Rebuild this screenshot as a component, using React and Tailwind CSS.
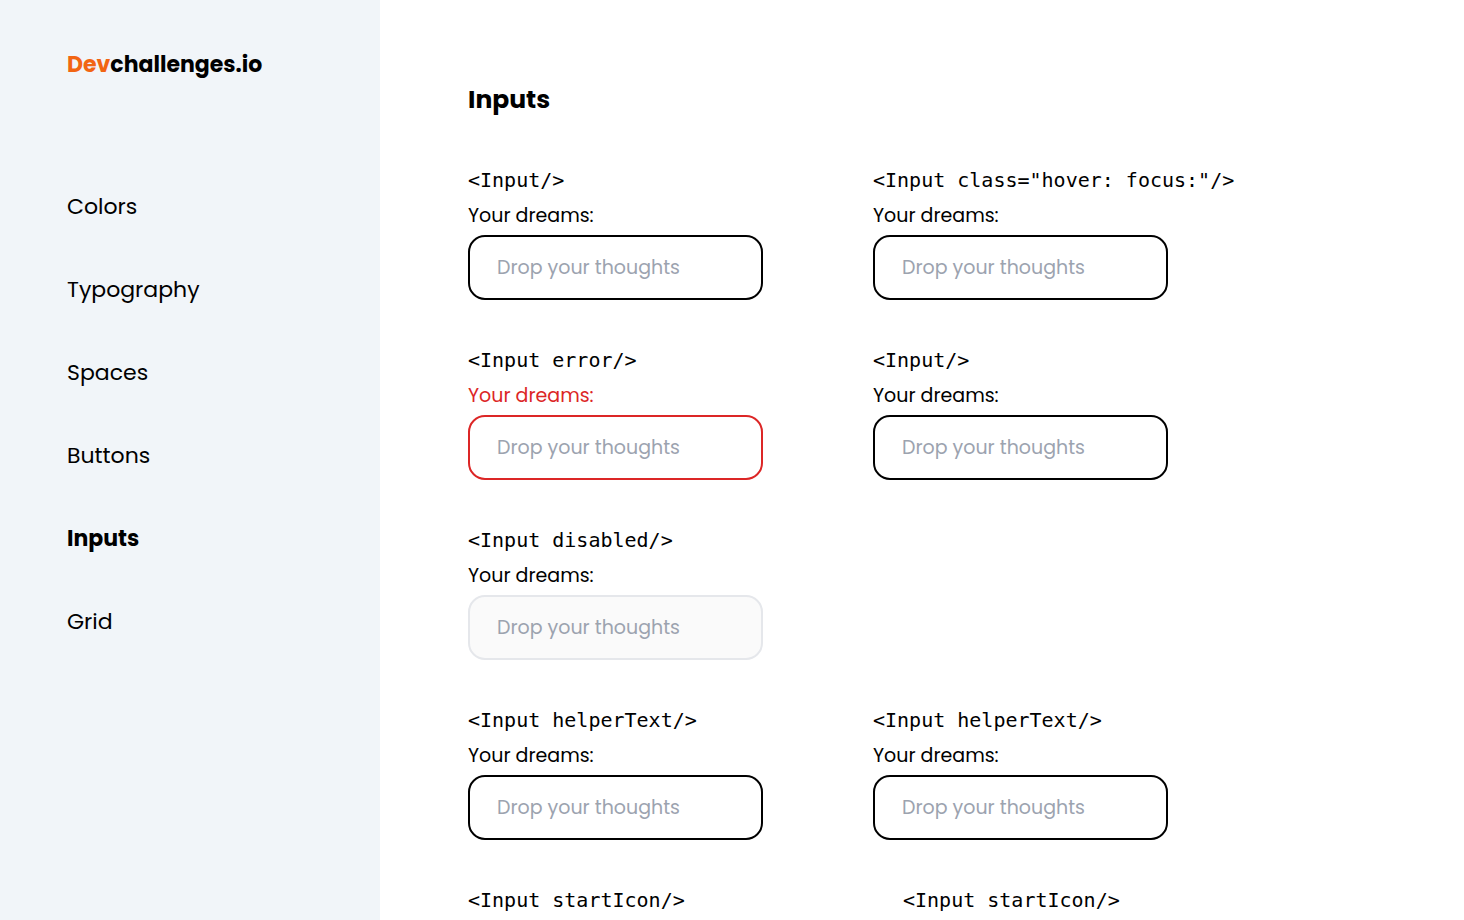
import { useId } from "react";

const navItems = ["Colors", "Typography", "Spaces", "Buttons", "Inputs", "Grid"];

const variants = {
  default: "border-black bg-white",
  error: "border-[#dc2626] bg-white",
  disabled: "border-[#e5e7eb] bg-[#fafafa]",
};

function Field({ code, variant = "default" }) {
  const id = useId();
  return (
    <div className="flex flex-col items-start">
      <code className="whitespace-nowrap font-['Consolas','DejaVu_Sans_Mono',monospace] text-[20px] leading-[30px]">
        {code}
      </code>
      <label
        htmlFor={id}
        className={`mt-1.5 mb-1 text-[19px] leading-[30px] ${variant === "error" ? "text-[#dc2626]" : "text-black"}`}
      >
        Your dreams:
      </label>
      <input
        id={id}
        type="text"
        placeholder="Drop your thoughts"
        disabled={variant === "disabled"}
        className={`h-[65px] w-[295px] rounded-[17px] border-2 px-[27px] text-[19px] outline-none placeholder:text-[#9ca3af] ${variants[variant]}`}
      />
    </div>
  );
}

function Row({ children, wide = false }) {
  return <div className={`flex ${wide ? "gap-[140px]" : "gap-[110px]"}`}>{children}</div>;
}

export default function App() {
  return (
    <div className="flex h-screen bg-white font-['Poppins','Inter',sans-serif] text-black">
      <aside className="w-[380px] shrink-0 bg-[#f1f5f9] pl-[67px] pt-12">
        <a href="#home" className="block text-[22px] font-bold leading-[33px]">
          <span className="text-[#f26513]">Dev</span>challenges.io
        </a>
        <nav className="mt-[109px] flex flex-col gap-[50px] text-[22px] leading-[33px]">
          {navItems.map((item) => (
            <a
              key={item}
              href={`#${item.toLowerCase()}`}
              className={item === "Inputs" ? "font-bold" : "font-normal"}
            >
              {item}
            </a>
          ))}
        </nav>
      </aside>
      <main className="min-w-0 flex-1 overflow-y-auto pl-[88px] pt-20 [scrollbar-width:none]">
        <h1 className="text-[25px] font-bold leading-10">Inputs</h1>
        <div className="mt-[45px] flex flex-col gap-[45px]">
          <Row>
            <Field code="<Input/>" />
            <Field code={'<Input class="hover: focus:"/>'} />
          </Row>
          <Row>
            <Field code="<Input error/>" variant="error" />
            <Field code="<Input/>" />
          </Row>
          <Row>
            <Field code="<Input disabled/>" variant="disabled" />
          </Row>
          <Row>
            <Field code="<Input helperText/>" />
            <Field code="<Input helperText/>" />
          </Row>
          <Row wide>
            <Field code="<Input startIcon/>" />
            <Field code="<Input startIcon/>" />
          </Row>
        </div>
      </main>
    </div>
  );
}
